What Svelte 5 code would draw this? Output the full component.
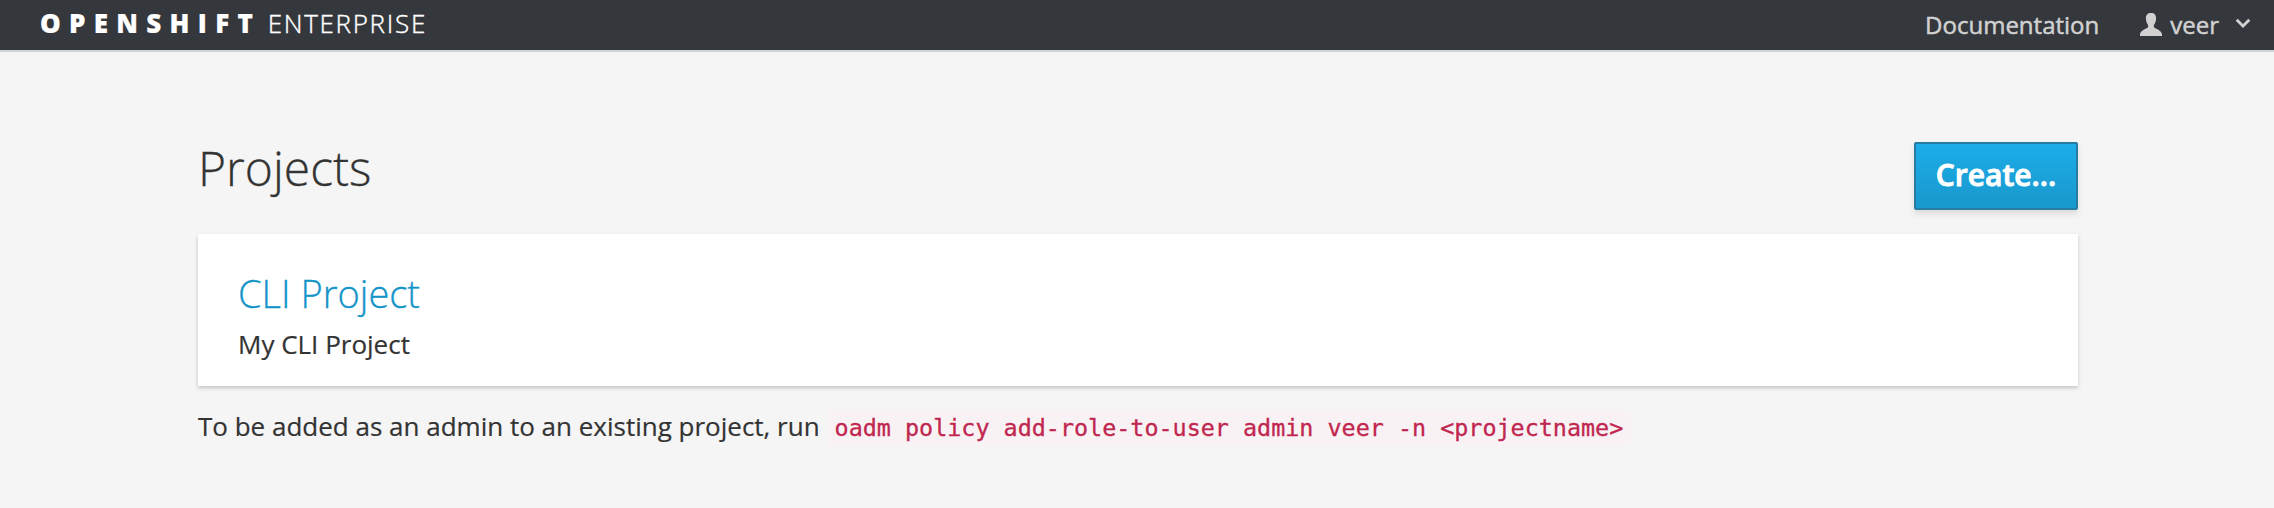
<script>
  const user = 'veer';
  const projects = [{ name: 'CLI Project', description: 'My CLI Project' }];
</script>

<div class="page">
  <header class="navbar">
    <div class="brand"><strong>OPENSHIFT</strong><span>ENTERPRISE</span></div>
    <nav>
      <a class="docs" href="#docs">Documentation</a>
      <a class="user" href="#user">
        <svg class="person" width="22" height="23" viewBox="0 0 22 23" aria-hidden="true">
          <path d="M11 0C7.800 0 5.800 1.900 5.900 5.300C5.900 7.400 6.500 9.800 7.700 11.500C8.300 12.500 8.400 13.700 7.700 14.600C6.800 15.700 0.300 17.400 0 21.500V23H22V21.500C21.700 17.400 15.200 15.700 14.300 14.600C13.600 13.700 13.700 12.500 14.300 11.500C15.500 9.800 16.100 7.400 16.100 5.300C16.200 1.900 14.200 0 11 0Z" />
        </svg>
        <span>{user}</span>
        <svg class="chevron" width="16" height="11" viewBox="0 0 16 11" aria-hidden="true">
          <path d="M1.700 1.800L8 8L14.300 1.800" />
        </svg>
      </a>
    </nav>
  </header>

  <main>
    <div class="heading">
      <h1>Projects</h1>
      <button>Create...</button>
    </div>
    {#each projects as project}
      <section class="tile">
        <h2><a href="#project">{project.name}</a></h2>
        <p>{project.description}</p>
      </section>
    {/each}
    <p class="hint">
      <span>To be added as an admin to an existing project, run</span>
      <code>oadm policy add-role-to-user admin {user} -n &lt;projectname&gt;</code>
    </p>
  </main>
</div>

<style>
  :global(body) { margin: 0; background: #f5f5f5; }
  .page {
    height: 508px;
    box-sizing: border-box;
    overflow: hidden;
    background: #f5f5f5;
    color: #333;
    font: 26px/36px 'Open Sans', sans-serif;
    -webkit-text-stroke: 0.2px currentColor;
  }
  a { color: inherit; text-decoration: none; }
  h1, h2, p { margin: 0; }
  .navbar {
    display: flex;
    justify-content: space-between;
    height: 50px;
    padding: 0 23px 0 40px;
    border-bottom: 2px solid #d1d3d6;
    background: #34373c;
  }
  .brand {
    display: flex;
    color: #fff;
    font-size: 26px;
    line-height: 47px;
  }
  .brand strong { font-weight: 800; letter-spacing: 8.3px; margin-right: 6.5px; }
  .brand span { font-weight: 300; letter-spacing: 1.7px; -webkit-text-stroke: 0.4px; }
  nav {
    display: flex;
    color: #d1d1d1;
    font-size: 24px;
    line-height: 50px;
    font-weight: 500;
    -webkit-text-stroke: 0.5px;
  }
  .user { display: flex; margin-left: 41px; }
  .person { margin: 13px 8px 0 0; fill: #d1d1d1; }
  .chevron { margin: 18px 0 0 16px; fill: none; stroke: #d1d1d1; stroke-width: 2.8; }
  main { width: 1880px; margin-left: 198px; padding-top: 82px; }
  .heading { display: flex; justify-content: space-between; height: 100px; }
  h1 { font-size: 48px; line-height: 68px; font-weight: 300; -webkit-text-stroke: 0.3px; }
  button {
    width: 164px;
    height: 68px;
    margin-top: 8px;
    padding: 0 0 2px;
    border: 2px solid #267da1;
    border-radius: 2px;
    background: linear-gradient(#1cace8, #1998cc);
    box-shadow: 0 4px 6px rgba(3, 3, 3, 0.1);
    color: #fff;
    font: 600 30px/60px 'Open Sans', sans-serif;
    -webkit-text-stroke: 0.9px;
  }
  .tile {
    height: 152px;
    box-sizing: border-box;
    padding: 36px 40px 0;
    background: #fff;
    box-shadow: 0 2px 4px rgba(0, 0, 0, 0.2);
  }
  h2 { color: #1394c9; font-size: 38px; line-height: 46px; font-weight: 300; -webkit-text-stroke: 0.3px; }
  .tile p { margin-top: 10px; }
  .hint { display: flex; margin-top: 22px; }
  code {
    height: 36px;
    margin: 2px 0 0 7px;
    padding: 0 8px;
    border-radius: 2px;
    background: #f9f2f4;
    color: #c0264f;
    font: 23.4px/36px 'DejaVu Sans Mono', monospace;
    -webkit-text-stroke: 0.3px;
  }
</style>
